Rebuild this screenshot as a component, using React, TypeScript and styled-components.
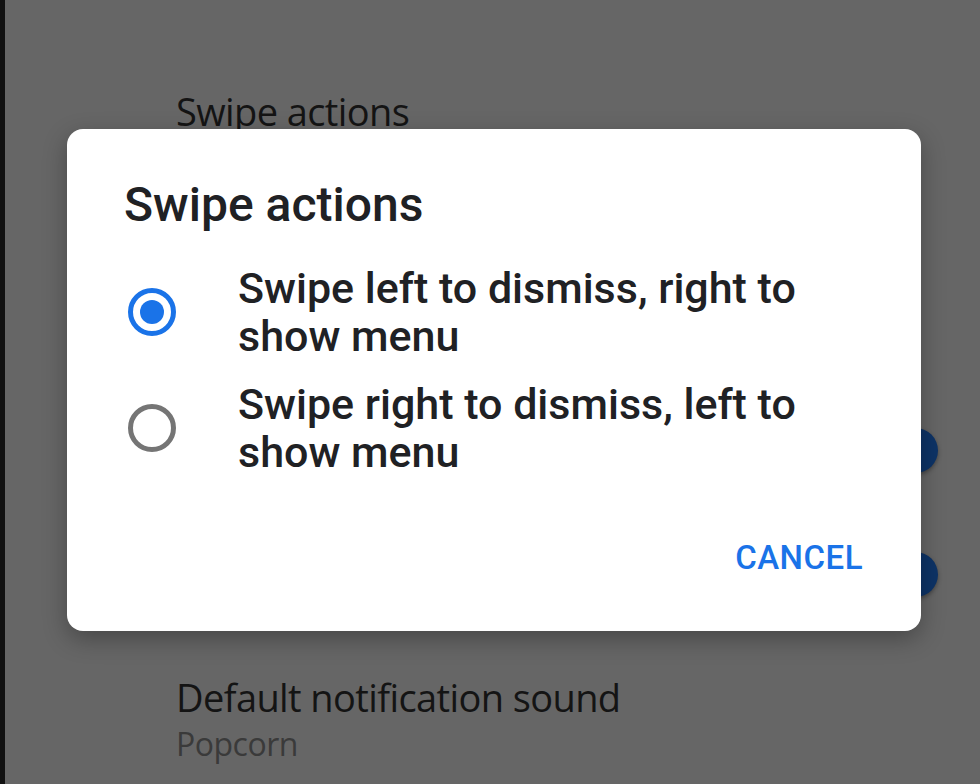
import styled, { createGlobalStyle } from "styled-components";
import { useState } from "react";

const GlobalStyle = createGlobalStyle`
  html, body {
    margin: 0;
    padding: 0;
    background: #666666;
  }
  body {
    font-family: Roboto, "Noto Sans", sans-serif;
  }
`;

const Screen = styled.div`
  position: relative;
  width: 980px;
  height: 784px;
  overflow: hidden;
  background: #666666;
  border-left: 5px solid #111111;
  box-sizing: border-box;
`;

const SettingsList = styled.div`
  display: flex;
  flex-direction: column;
  padding-left: 171px;
  padding-top: 76px;
`;

const SettingRow = styled.div<{ $height: number; $align?: string }>`
  display: flex;
  align-items: ${(p) => p.$align ?? "center"};
  justify-content: space-between;
  height: ${(p) => p.$height}px;
  box-sizing: border-box;
`;

const SettingText = styled.div<{ $top?: number }>`
  display: flex;
  flex-direction: column;
  padding-top: ${(p) => p.$top ?? 0}px;
`;

const SettingTitle = styled.div`
  font-family: "Open Sans", Roboto, sans-serif;
  font-size: 38px;
  color: #141414;
  line-height: 44px;
  letter-spacing: -0.6px;
`;

const SettingSummary = styled.div`
  font-family: "Open Sans", Roboto, sans-serif;
  font-size: 32px;
  color: #3a3a3a;
  line-height: 44px;
  margin-top: 3px;
  letter-spacing: -0.5px;
`;

const ToggleKnob = styled.div`
  width: 45px;
  height: 45px;
  margin-right: 42px;
  border-radius: 50%;
  background: #0d3366;
  box-shadow: 0 2px 4px rgba(0, 0, 0, 0.35);
`;

const Scrim = styled.div`
  position: absolute;
  inset: 0;
  display: flex;
  justify-content: flex-start;
  align-items: flex-start;
  padding: 129px 0 0 62px;
`;

const Dialog = styled.div`
  width: 854px;
  height: 502px;
  box-sizing: border-box;
  background: #ffffff;
  border-radius: 16px;
  box-shadow: 0 8px 24px rgba(0, 0, 0, 0.3);
  padding: 48px 58px 0 57px;
  display: flex;
  flex-direction: column;
`;

const DialogTitle = styled.h2`
  margin: 0 0 31px 0;
  font-size: 48px;
  font-weight: 500;
  color: #202124;
  line-height: 56px;
`;

const OptionList = styled.div`
  display: flex;
  flex-direction: column;
  gap: 20px;
`;

const Option = styled.label`
  display: flex;
  align-items: center;
  gap: 62px;
  cursor: pointer;
`;

const Radio = styled.span<{ $checked: boolean }>`
  flex: none;
  width: 48px;
  height: 48px;
  margin-left: 4px;
  box-sizing: border-box;
  border-radius: 50%;
  border: 5px solid ${(p) => (p.$checked ? "#1a73e8" : "#757575")};
  display: flex;
  align-items: center;
  justify-content: center;

  &::after {
    content: "";
    width: 24px;
    height: 24px;
    border-radius: 50%;
    background: #1a73e8;
    display: ${(p) => (p.$checked ? "block" : "none")};
  }
`;

const OptionText = styled.span`
  font-size: 43px;
  font-weight: 500;
  line-height: 48px;
  color: #202124;
`;

const Actions = styled.div`
  display: flex;
  justify-content: flex-end;
  margin-top: 62px;
`;

const TextButton = styled.button`
  border: none;
  background: transparent;
  padding: 0;
  font-family: Roboto, sans-serif;
  font-size: 33px;
  font-weight: 500;
  color: #1a73e8;
  letter-spacing: 0.5px;
`;

const options = [
  ["Swipe left to dismiss, right to", "show menu"],
  ["Swipe right to dismiss, left to", "show menu"],
];

const App = () => {
  const [selected, setSelected] = useState(0);

  return (
    <Screen>
      <GlobalStyle />
      <SettingsList>
        <SettingRow $height={70}>
          <SettingText>
            <SettingTitle>Swipe actions</SettingTitle>
          </SettingText>
        </SettingRow>
        <SettingRow $height={242} />
        <SettingRow $height={124}>
          <SettingText />
          <ToggleKnob />
        </SettingRow>
        <SettingRow $height={124}>
          <SettingText />
          <ToggleKnob />
        </SettingRow>
        <SettingRow $height={148} $align="flex-start">
          <SettingText $top={39}>
            <SettingTitle>Default notification sound</SettingTitle>
            <SettingSummary>Popcorn</SettingSummary>
          </SettingText>
        </SettingRow>
      </SettingsList>
      <Scrim>
        <Dialog>
          <DialogTitle>Swipe actions</DialogTitle>
          <OptionList>
            {options.map(([first, second], i) => (
              <Option key={first} onClick={() => setSelected(i)}>
                <Radio $checked={selected === i} />
                <OptionText>
                  {first}
                  <br />
                  {second}
                </OptionText>
              </Option>
            ))}
          </OptionList>
          <Actions>
            <TextButton>CANCEL</TextButton>
          </Actions>
        </Dialog>
      </Scrim>
    </Screen>
  );
};

export default App;
